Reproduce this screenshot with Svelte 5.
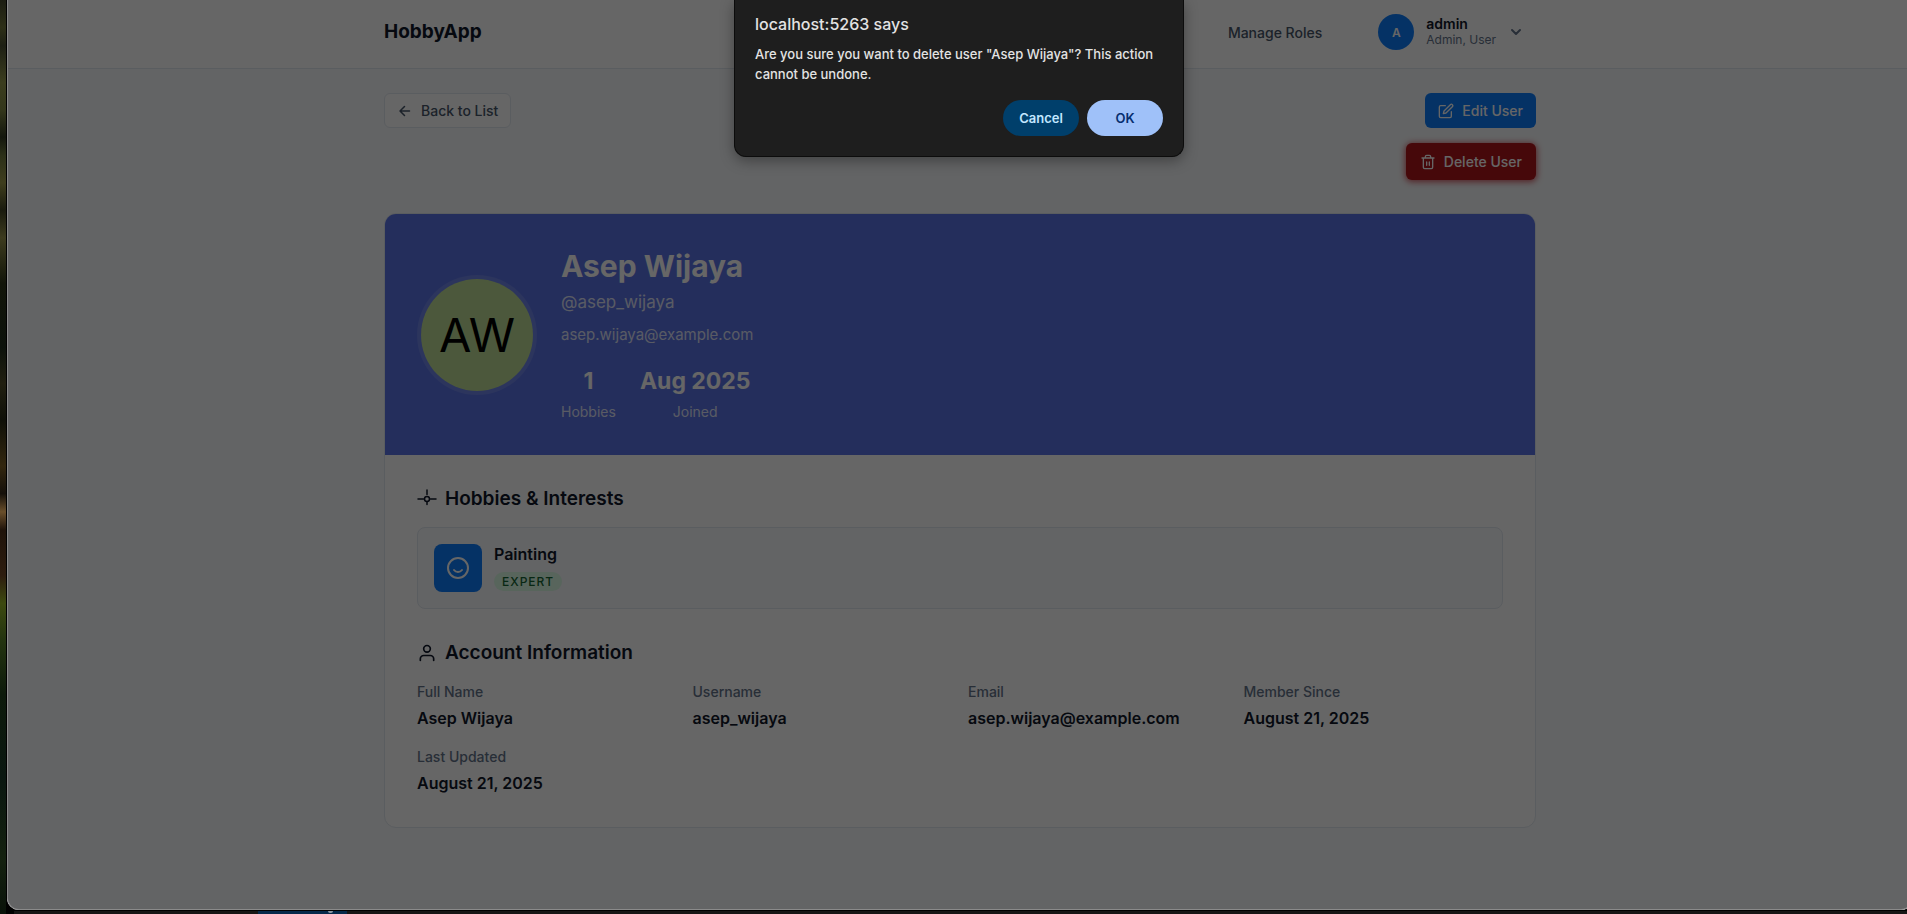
<script>
  const stats = [
    { value: '1', label: 'Hobbies' },
    { value: 'Aug 2025', label: 'Joined' }
  ];
  const account = [
    { label: 'Full Name', value: 'Asep Wijaya' },
    { label: 'Username', value: 'asep_wijaya' },
    { label: 'Email', value: 'asep.wijaya@example.com' },
    { label: 'Member Since', value: 'August 21, 2025' },
    { label: 'Last Updated', value: 'August 21, 2025' }
  ];
</script>

<div class="desktop">
  <div class="wallpaper"></div>
  <div class="window">
    <header class="topbar">
      <div class="container bar">
        <a class="brand" href="#home">HobbyApp</a>
        <nav><a class="navlink" href="#roles">Manage Roles</a></nav>
        <button class="user" type="button">
          <span class="initial">A</span>
          <span class="who">
            <span class="uname">admin</span>
            <span class="uroles">Admin, User</span>
          </span>
          <svg class="chev" width="16" height="16" viewBox="0 0 16 16"><path d="M4 6l4 4 4-4" /></svg>
        </button>
      </div>
    </header>

    <main class="container">
      <div class="actions">
        <a class="btn back" href="#list">
          <svg width="16" height="16" viewBox="0 0 16 16"><path d="M12.5 8h-9M7.5 3.5L3 8l4.5 4.5" /></svg>
          Back to List
        </a>
        <div class="right">
          <a class="btn edit" href="#edit">
            <svg width="16" height="16" viewBox="0 0 24 24"><path d="M11 4H4a2 2 0 0 0-2 2v14a2 2 0 0 0 2 2h14a2 2 0 0 0 2-2v-7" /><path d="M18.5 2.5a2.121 2.121 0 0 1 3 3L12 15l-4 1 1-4z" /></svg>
            Edit User
          </a>
          <button class="btn delete" type="button">
            <svg width="16" height="16" viewBox="0 0 24 24"><path d="M3 6h18M19 6v14a2 2 0 0 1-2 2H7a2 2 0 0 1-2-2V6M8 6V4a2 2 0 0 1 2-2h4a2 2 0 0 1 2 2v2M10 12v5M14 12v5" /></svg>
            Delete User
          </button>
        </div>
      </div>

      <article class="card">
        <section class="hero">
          <div class="avatar">AW</div>
          <div class="info">
            <h1>Asep Wijaya</h1>
            <p class="handle">@asep_wijaya</p>
            <p class="mail">asep.wijaya@example.com</p>
            <div class="stats">
              {#each stats as s}
                <div class="stat"><strong>{s.value}</strong><span>{s.label}</span></div>
              {/each}
            </div>
          </div>
        </section>

        <div class="body">
          <section>
            <h2>
              <svg class="node" width="20" height="20" viewBox="0 0 20 20"><circle cx="10" cy="10" r="2.5" /><path d="M10 1v4.500M10 13v2.500M1 10h5.500M13.500 10h5.500" /></svg>
              Hobbies &amp; Interests
            </h2>
            <div class="hobby">
              <div class="tile">
                <svg width="24" height="24" viewBox="0 0 24 24"><circle cx="12" cy="12" r="10" /><path d="M8 14s1.500 2 4 2 4-2 4-2" /></svg>
              </div>
              <div>
                <h3>Painting</h3>
                <span class="level">Expert</span>
              </div>
            </div>
          </section>

          <section>
            <h2>
              <svg width="20" height="20" viewBox="0 0 24 24"><path d="M20 21v-2a4 4 0 0 0-4-4H8a4 4 0 0 0-4 4v2" /><circle cx="12" cy="7" r="4" /></svg>
              Account Information
            </h2>
            <dl>
              {#each account as a}
                <div><dt>{a.label}</dt><dd>{a.value}</dd></div>
              {/each}
            </dl>
          </section>
        </div>
      </article>
    </main>

    <div class="overlay">
      <div class="dialog" role="alertdialog" aria-labelledby="dlg-title" aria-describedby="dlg-text">
        <h4 id="dlg-title">localhost:5263 says</h4>
        <p id="dlg-text">Are you sure you want to delete user "Asep Wijaya"? This action cannot be undone.</p>
        <div class="choices">
          <button class="cancel" type="button">Cancel</button>
          <button class="ok" type="button">OK</button>
        </div>
      </div>
    </div>
  </div>
  <div class="behind"><span class="peek"><i class="mark"></i></span></div>
</div>

<style>
  :global(body) { margin: 0; background: #000; }
  .desktop {
    box-sizing: border-box;
    min-height: 100vh;
    display: grid;
    grid-template-columns: 6px minmax(0, 1fr);
    grid-template-rows: 1fr 3px;
    overflow: hidden;
    background: #000;
    font-family: Inter, "Liberation Sans", sans-serif;
    color: #0f172a;
  }
  h1, h2, h3, h4, p, dl, dd { margin: 0; }
  a { color: inherit; text-decoration: none; }
  button { font-family: inherit; cursor: pointer; }
  svg {
    fill: none;
    stroke: currentColor;
    stroke-width: 2;
    stroke-linecap: round;
    stroke-linejoin: round;
    flex: none;
  }
  .wallpaper {
    grid-row: 1 / 3;
    background: linear-gradient(#1c1d12, #2d2f17 3%, #1e2014 5%, #3b3d1e 9%, #34371b 12%, #14170d 15%, #2c3018 17%, #3f3e1d 20%, #1a1b0e 23%, #3d3b1e 26%, #121509 31%, #0c120b 38%, #211f10 42%, #0f1008 46%, #33270f 51%, #15100a 54%, #6a4f2b 56%, #1f130a 58%, #2e1d0f 63%, #3d4a0f 66%, #243410 70%, #0d1a0b 76%, #0a1710 85%, #14210f 94%, #091209);
  }
  .window {
    position: relative;
    margin: 0 -6px 1px 1px;
    border-radius: 0 0 12px 12px;
    overflow: hidden;
    background: #f8fafc;
  }
  .container {
    box-sizing: border-box;
    max-width: 1200px;
    margin: 0 auto;
    padding: 0 24px;
  }
  .topbar { background: #fff; border-bottom: 1px solid #e2e8f0; }
  .bar { height: 68px; padding-bottom: 4px; display: flex; align-items: center; }
  .brand { font-size: 19px; line-height: 24px; font-weight: 700; margin-right: auto; }
  .navlink { font-size: 14px; font-weight: 500; color: #475569; }
  .user {
    margin-left: 44px;
    display: flex;
    align-items: center;
    gap: 12px;
    padding: 0 12px;
    border: 0;
    background: none;
    text-align: left;
  }
  .initial {
    width: 36px;
    height: 36px;
    border-radius: 50%;
    display: grid;
    place-items: center;
    background: #0d7dfc;
    color: #fff;
    font-size: 12px;
    font-weight: 600;
  }
  .who { display: flex; flex-direction: column; line-height: 16px; }
  .uname { font-size: 14px; font-weight: 600; color: #0f172a; }
  .uroles { font-size: 12px; color: #64748b; }
  .chev { color: #64748b; }

  .actions {
    display: flex;
    justify-content: space-between;
    align-items: flex-start;
    padding: 24px 0 33px;
  }
  .right { display: flex; flex-direction: column; align-items: flex-end; gap: 15px; }
  .btn {
    box-sizing: border-box;
    display: flex;
    align-items: center;
    gap: 8px;
    height: 35px;
    padding: 0 12px;
    border: 1px solid transparent;
    border-radius: 6px;
    font-size: 14px;
    font-weight: 500;
  }
  .back { background: #fff; border-color: #e2e8f0; color: #475569; }
  .edit { background: #0d7dfc; color: #fff; }
  .delete {
    height: 37px;
    padding: 0 13px;
    background: #b0141a;
    color: #fff;
    box-shadow: 0 1px 6px 1px rgba(190, 20, 30, 0.7);
  }
  .back svg { stroke-width: 1.5; }

  .card {
    border: 1px solid #e2e8f0;
    border-radius: 12px;
    background: #fff;
    overflow: hidden;
  }
  .hero {
    display: flex;
    align-items: center;
    gap: 24px;
    padding: 32px;
    background: #5a73e6;
    color: #fff;
  }
  .avatar {
    box-sizing: border-box;
    width: 120px;
    height: 120px;
    flex: none;
    border: 4px solid rgba(255, 255, 255, 0.12);
    border-radius: 50%;
    background: #bedc96;
    background-clip: padding-box;
    display: grid;
    place-items: center;
    color: #000;
    font-size: 47px;
  }
  h1 { font-size: 30px; line-height: 40px; font-weight: 700; }
  .handle { font-size: 17px; line-height: 28px; margin-top: 2px; opacity: 0.8; }
  .mail { font-size: 15px; line-height: 24px; margin-top: 7px; opacity: 0.8; }
  .stats { display: flex; gap: 24px; margin-top: 16px; }
  .stat { display: flex; flex-direction: column; align-items: center; }
  .stat strong { font-size: 23px; line-height: 36px; font-weight: 700; margin-bottom: 2px; }
  .stat span { font-size: 14px; line-height: 22px; opacity: 0.8; }

  .body { padding: 32px; display: grid; gap: 32px; }
  h2 {
    display: flex;
    align-items: center;
    gap: 8px;
    margin-bottom: 16px;
    font-size: 19px;
    line-height: 24px;
    font-weight: 600;
  }
  .node { stroke-width: 1.5; }
  .hobby {
    display: flex;
    align-items: flex-start;
    gap: 12px;
    padding: 16px;
    border: 1px solid #e2e8f0;
    border-radius: 8px;
    background: #f8fafc;
  }
  .tile {
    width: 48px;
    height: 48px;
    border-radius: 8px;
    display: grid;
    place-items: center;
    background: #0d7dfc;
    color: #fff;
  }
  h3 { font-size: 16px; line-height: 20px; font-weight: 600; margin-bottom: 8px; }
  .level {
    display: block;
    width: max-content;
    padding: 0 8px;
    border-radius: 10px;
    background: #dcfce7;
    color: #166534;
    font-size: 12px;
    line-height: 19px;
    font-weight: 500;
    letter-spacing: 1px;
    text-transform: uppercase;
  }
  dl { display: grid; grid-template-columns: repeat(4, 1fr); gap: 16px; }
  dt { font-size: 14px; line-height: 21px; font-weight: 500; color: #64748b; margin-bottom: 4px; }
  dd { font-size: 16px; line-height: 24px; font-weight: 600; }

  .overlay {
    position: absolute;
    inset: 0;
    display: flex;
    justify-content: center;
    align-items: flex-start;
    padding-right: 2px;
    background: rgba(0, 0, 0, 0.6);
    border: solid #8a8a8a;
    border-width: 0 1px 1px;
    border-radius: 0 0 12px 12px;
  }
  .dialog {
    box-sizing: border-box;
    width: 450px;
    padding: 14px 20px 20px;
    border: solid #0c0c0c;
    border-width: 0 1px 1px;
    border-radius: 0 0 12px 12px;
    background: #1e1e1e;
    color: #e3e3e3;
    box-shadow: 0 4px 14px rgba(0, 0, 0, 0.35);
  }
  h4 { font-size: 16px; line-height: 20px; font-weight: 500; }
  .dialog p { margin-top: 10px; font-size: 13px; line-height: 20px; font-weight: 500; }
  .choices { display: flex; justify-content: flex-end; gap: 8px; margin-top: 16px; }
  .choices button {
    width: 76px;
    height: 36px;
    padding: 0;
    border: 0;
    border-radius: 18px;
    font-size: 13px;
    font-weight: 600;
  }
  .cancel { background: #003f6b; color: #c2e7ff; }
  .ok { background: #9fc1f9; color: #062e6f; }

  .behind { display: flex; margin-left: 8px; background: #171615; }
  .peek { display: flex; justify-content: flex-end; width: 89px; margin-left: 244px; background: #06294a; }
  .mark { width: 5px; height: 2px; margin-right: 14px; border-radius: 0 0 2px 2px; background: #8b98a5; }
</style>
